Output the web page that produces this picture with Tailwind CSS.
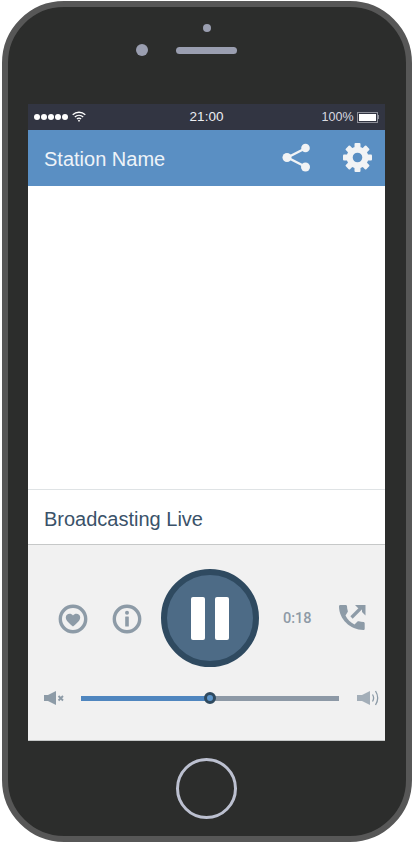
<!DOCTYPE html>
<html lang="en">
<head>
  <meta charset="UTF-8" />
  <meta name="viewport" content="width=device-width, initial-scale=1.0" />
  <title>Station Name</title>
  <script src="https://cdn.jsdelivr.net/npm/@tailwindcss/browser@4"></script>
</head>
<body class="bg-white h-[843px] w-[413px] overflow-hidden font-['Liberation_Sans',sans-serif] pt-px pl-[1.5px]">

  <!-- phone body -->
  <div class="w-[410px] h-[841px] rounded-[62px] border-[6px] border-[#575757] bg-[#2c2d2c] flex flex-col items-center">

    <!-- camera and speaker -->
    <div class="h-[97px] w-full flex flex-col items-center pt-[17px]">
      <div class="w-2 h-2 rounded-full bg-[#9a9eb0]"></div>
      <div class="flex items-center mt-[12px] pr-[40px]">
        <div class="w-3 h-3 rounded-full bg-[#9a9eb0] mr-[28px]"></div>
        <div class="w-[61px] h-[7px] rounded-full bg-[#9a9eb0]"></div>
      </div>
    </div>

    <!-- screen -->
    <div class="w-[357px] h-[637px] flex flex-col bg-white">
      <div class="h-[26px] bg-[#323542] flex items-center justify-between pl-[6px] pr-[6px] text-[#eceef2]">
        <div class="flex-1 flex items-center gap-[1px]">
          <span class="w-[6px] h-[6px] rounded-full bg-white"></span>
          <span class="w-[6px] h-[6px] rounded-full bg-white"></span>
          <span class="w-[6px] h-[6px] rounded-full bg-white"></span>
          <span class="w-[6px] h-[6px] rounded-full bg-white"></span>
          <span class="w-[6px] h-[6px] rounded-full bg-white"></span>
          <svg class="ml-[3px] mb-[2px]" width="14" height="11" viewBox="0 0 14 11" fill="none" stroke="#fff" stroke-width="1.3">
            <path d="M.7 3.8C4.3.4 9.700.4 13.300 3.800" />
            <path d="M2.800 5.900C5.200 3.800 8.800 3.800 11.200 5.900" />
            <path d="M4.900 8C6.100 7 7.900 7 9.100 8" />
            <circle cx="7" cy="9.700" r=".9" fill="#fff" stroke="none" />
          </svg>
        </div>
        <span class="text-[13.500px] leading-none">21:00</span>
        <div class="flex-1 flex items-center justify-end">
          <span class="text-[12.500px] leading-none mr-[3px] text-[#d8dae0]">100%</span>
          <div class="w-[21px] h-[11px] border border-[#8d8f99] p-px"><div class="w-full h-full bg-white"></div></div>
          <div class="w-[1.500px] h-[4px] bg-[#8d8f99]"></div>
        </div>
      </div>

      <div class="h-[56px] bg-[#5a8fc3] flex items-center pl-[16px] pr-[13px] text-[#eef3f8]">
        <span class="text-[20px] flex-1 pt-[2px]">Station Name</span>
        <svg width="29" height="29" viewBox="0 0 29 29" fill="#f1f3f5" stroke="#f1f3f5" class="mr-[32px] mb-[1px]">
          <path d="M24 5 5.500 14.500 24 24" fill="none" stroke-width="2.400" />
          <circle cx="23.500" cy="5" r="4.300" stroke="none" />
          <circle cx="5" cy="14.500" r="4.500" stroke="none" />
          <circle cx="23.500" cy="24" r="4.500" stroke="none" />
        </svg>
        <svg width="29" height="29" viewBox="-14.500 -14.500 29 29" fill="#f1f3f5" class="mb-[1px]">
          <circle r="7.800" fill="none" stroke="#f1f3f5" stroke-width="6" />
          <rect x="-3" y="-14.500" width="6" height="6" rx="1" />
          <rect x="-3" y="-14.500" width="6" height="6" rx="1" transform="rotate(45)" />
          <rect x="-3" y="-14.500" width="6" height="6" rx="1" transform="rotate(90)" />
          <rect x="-3" y="-14.500" width="6" height="6" rx="1" transform="rotate(135)" />
          <rect x="-3" y="-14.500" width="6" height="6" rx="1" transform="rotate(180)" />
          <rect x="-3" y="-14.500" width="6" height="6" rx="1" transform="rotate(225)" />
          <rect x="-3" y="-14.500" width="6" height="6" rx="1" transform="rotate(270)" />
          <rect x="-3" y="-14.500" width="6" height="6" rx="1" transform="rotate(315)" />
        </svg>
      </div>

      <div class="h-[303px] bg-white"></div>

      <div class="h-[56px] bg-white border-y border-t-[#dfe3e5] border-b-[#c6c8c8] flex items-center pl-[16px]">
        <span class="text-[20px] text-[#3a5269] pt-[3px]">Broadcasting Live</span>
      </div>

      <!-- player -->
      <div class="flex-1 bg-[#f1f1f1] border-b border-[#c6c8c8]">
        <div class="flex items-center h-[98px] mt-[24px] pl-[30px]">
          <svg width="30" height="30" viewBox="0 0 30 30" class="mt-[2px]">
            <circle cx="15" cy="15" r="12.700" fill="none" stroke="#8d9ba7" stroke-width="3.400" />
            <path d="M15 22.500C9.500 18 7.800 15.800 7.800 13.200 7.800 9.500 13 8.500 15 11.500 17 8.500 22.200 9.500 22.200 13.200 22.200 15.800 20.500 18 15 22.500Z" fill="#8d9ba7" />
          </svg>
          <svg width="30" height="30" viewBox="0 0 30 30" class="ml-[24px] mt-[2px]">
            <circle cx="15" cy="15" r="12.700" fill="none" stroke="#8d9ba7" stroke-width="3.400" />
            <circle cx="15" cy="8.800" r="2" fill="#8d9ba7" />
            <rect x="13.200" y="12.500" width="3.600" height="10" rx=".5" fill="#8d9ba7" />
          </svg>
          <div class="w-[98px] h-[98px] ml-[19px] rounded-full bg-[#4d6b86] border-[6px] border-[#2f4a60] flex items-center justify-center gap-[10px]">
            <div class="w-[14px] h-[43px] rounded-[2px] bg-white"></div>
            <div class="w-[14px] h-[43px] rounded-[2px] bg-white"></div>
          </div>
          <span class="ml-[24px] mt-[2px] w-[30px] font-['Roboto',sans-serif] font-medium text-[14.500px] text-[#8e9aa6]">0:18</span>
          <svg width="32" height="32" viewBox="0 0 32 32" class="ml-[23px]" fill="#8d9ba7">
            <path d="M9.500 13.600c1.800 4 5 7.100 9 9l3-3c.4-.4.900-.5 1.400-.3 1.500.5 2.900.8 4.500.8.700 0 1.300.6 1.300 1.300v5.300c0 .7-.6 1.300-1.300 1.300C14 28 3 17 3 4.300 3 3.600 3.600 3 4.300 3h5.400c.7 0 1.300.6 1.300 1.300 0 1.600.3 3.100.8 4.600.1.500 0 1-.3 1.400z" />
            <path d="M15.500 15.500 26 5" fill="none" stroke="#8d9ba7" stroke-width="3.200" />
            <path d="M19 3h10.500v10.500l-3.500-3.500V6.500h-3.500z" />
          </svg>
        </div>

        <div class="flex items-center mt-[19px] pl-[16px] h-[24px]">
          <svg width="20" height="14" viewBox="0 0 20 14" fill="#8d9ba7">
            <path d="M0 4h4l8-4v14l-8-4H0z" />
            <path d="M14.500 5 19 9.500M19 5l-4.500 4.500" fill="none" stroke="#8d9ba7" stroke-width="1.900" />
          </svg>
          <div class="relative flex ml-[17px] w-[258px] h-[5px]">
            <div class="w-[128px] bg-[#4f86bf]"></div>
            <div class="flex-1 bg-[#8d99a6]"></div>
            <div class="absolute left-[123px] top-[-3.500px] w-3 h-3 rounded-full bg-[#5f97cc] border-[3px] border-[#2f4a60]"></div>
          </div>
          <svg width="22" height="18" viewBox="0 0 22 18" class="ml-[18px]" fill="#a3aeb8">
            <path d="M0 6h5l8-4v14l-8-4H0z" />
            <path d="M15.500 5.500c1.400 2.200 1.400 4.800 0 7M18.500 2c2.700 4.300 2.700 9.700 0 14" fill="none" stroke="#8d9ba7" stroke-width="1.300" />
          </svg>
        </div>
      </div>
    </div>

    <!-- home button -->
    <div class="w-[61px] h-[61px] mt-[17px] rounded-full border-[3px] border-[#bcc0d0]"></div>
  </div>

</body>
</html>
